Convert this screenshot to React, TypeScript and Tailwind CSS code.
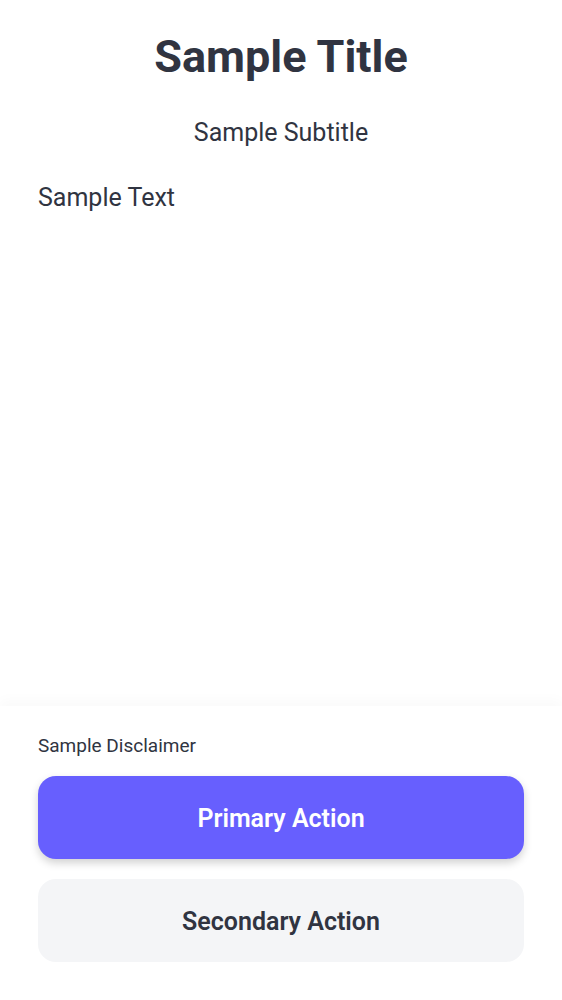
export default function App() {
  return (
    <div
      className="flex h-screen flex-col bg-white text-[#303441]"
      style={{ fontFamily: "Roboto, 'Noto Sans', sans-serif" }}
    >
      {/* main content */}
      <div className="flex-1 px-[38px] pt-[30px]">
        <h1 className="text-center text-[45px] font-bold leading-[54px]">Sample Title</h1>
        <p className="mt-[34px] text-center text-[25px] leading-[30px]">Sample Subtitle</p>
        <p className="mt-[35px] text-[25px] leading-[30px]">Sample Text</p>
      </div>

      {/* bottom action area */}
      <div className="flex flex-col px-[38px] pt-[28px] pb-[38px] shadow-[0_-6px_12px_rgba(0,0,0,0.025)]">
        <p className="text-[19px] leading-[24px]">Sample Disclaimer</p>
        <button className="mt-[18px] h-[83px] rounded-[18px] bg-[#675ffe] pt-[2px] text-[25px] font-semibold text-white shadow-[0_4px_8px_rgba(0,0,0,0.18)]">
          Primary Action
        </button>
        <button className="mt-[20px] h-[83px] rounded-[18px] bg-[#f4f5f7] pt-[2px] text-[25px] font-semibold text-[#303441]">
          Secondary Action
        </button>
      </div>
    </div>
  )
}
